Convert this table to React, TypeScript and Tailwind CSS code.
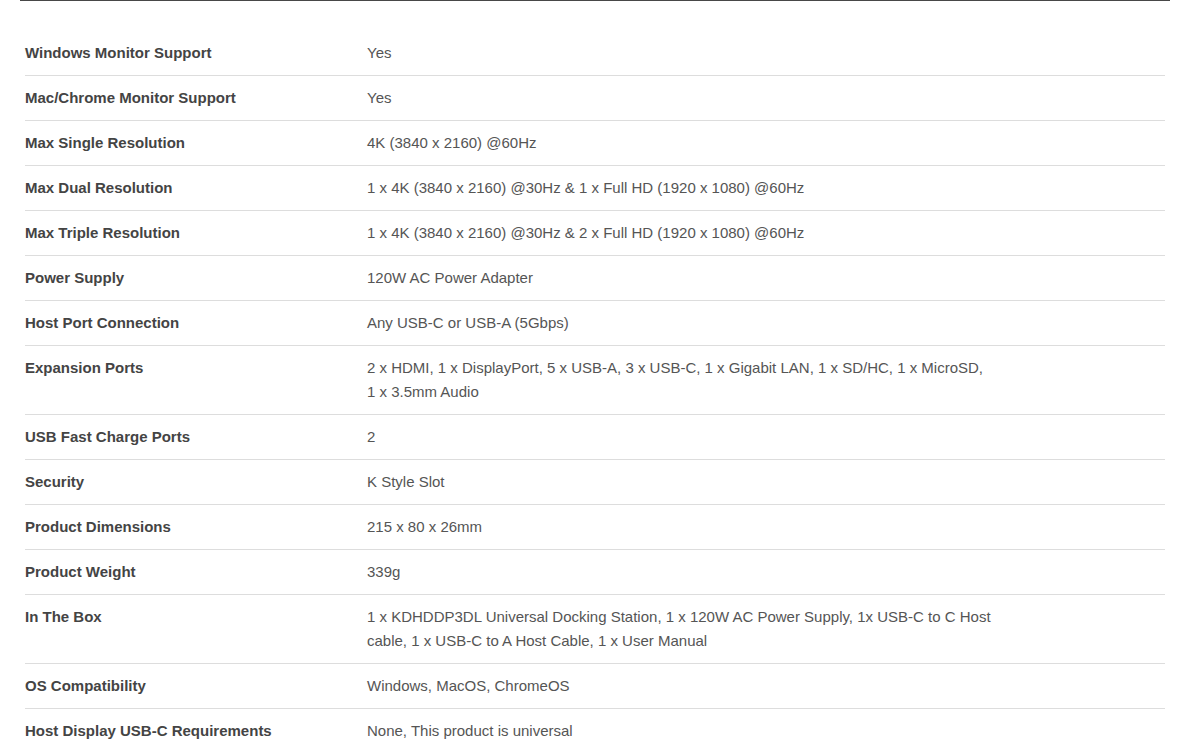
import React from "react";

const rows: [string, string][] = [
  ["Windows Monitor Support", "Yes"],
  ["Mac/Chrome Monitor Support", "Yes"],
  ["Max Single Resolution", "4K (3840 x 2160) @60Hz"],
  ["Max Dual Resolution", "1 x 4K (3840 x 2160) @30Hz & 1 x Full HD (1920 x 1080) @60Hz"],
  ["Max Triple Resolution", "1 x 4K (3840 x 2160) @30Hz & 2 x Full HD (1920 x 1080) @60Hz"],
  ["Power Supply", "120W AC Power Adapter"],
  ["Host Port Connection", "Any USB-C or USB-A (5Gbps)"],
  ["Expansion Ports", "2 x HDMI, 1 x DisplayPort, 5 x USB-A, 3 x USB-C, 1 x Gigabit LAN, 1 x SD/HC, 1 x MicroSD, 1 x 3.5mm Audio"],
  ["USB Fast Charge Ports", "2"],
  ["Security", "K Style Slot"],
  ["Product Dimensions", "215 x 80 x 26mm"],
  ["Product Weight", "339g"],
  ["In The Box", "1 x KDHDDP3DL Universal Docking Station, 1 x 120W AC Power Supply, 1x USB-C to C Host cable, 1 x USB-C to A Host Cable, 1 x User Manual"],
  ["OS Compatibility", "Windows, MacOS, ChromeOS"],
  ["Host Display USB-C Requirements", "None, This product is universal"],
];

export default function App() {
  return (
    <div
      className="w-[1203px] h-[752px] overflow-hidden bg-white"
      style={{ fontFamily: '"Liberation Sans", Arial, sans-serif' }}
    >
      <div className="ml-[20px] w-[1150px] border-t border-[#484848]" />
      <div className="ml-[25px] mr-[38px] mt-[30px]">
        {rows.map(([k, v]) => (
          <div key={k} className="flex border-b border-[#dddddd] py-[10px] text-[15px] leading-[24px]">
            <div className="w-[342px] shrink-0 font-bold text-[#444444]">{k}</div>
            <div className="w-[627px] text-[#555555]">{v}</div>
          </div>
        ))}
      </div>
    </div>
  );
}
